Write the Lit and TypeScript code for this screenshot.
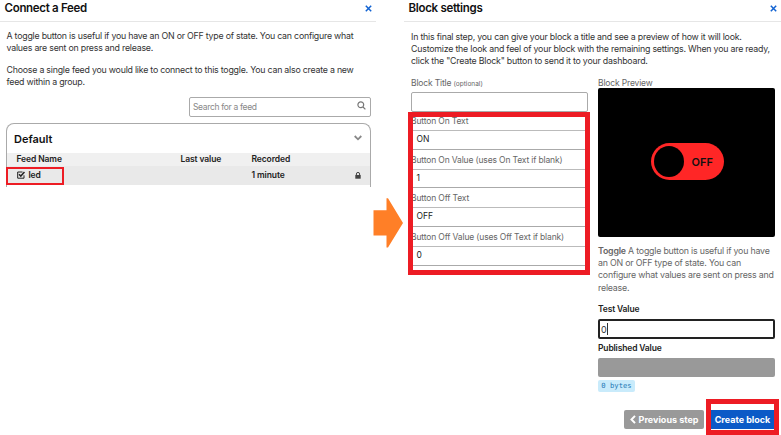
import { LitElement, html, css } from "lit";
import { customElement, property } from "lit/decorators.js";

const base = css`
  * { box-sizing: border-box; }
  p, h2 { margin: 0; }
  .l { display: block; white-space: nowrap; }
  svg { display: block; }
`;

@customElement("panel-header")
class PanelHeader extends LitElement {
  @property() heading = "";
  static styles = [base, css`
    :host { display: flex; height: 22px; justify-content: space-between; align-items: center; border-bottom: 1px solid #e6e6e6; padding: 0 4px 5px 4.5px; }
    h2 { font-size: 11.5px; font-weight: 600; line-height: 16px; color: #111; white-space: nowrap; letter-spacing: -.3px; }
  `];
  render() {
    return html`<h2>${this.heading}</h2>
      <svg width="7" height="7" viewBox="0 0 7 7"><path d="M.8.8 6.2 6.2M6.2.8.8 6.2" stroke="#1263d2" stroke-width="1.5" fill="none"/></svg>`;
  }
}

@customElement("feed-panel")
class FeedPanel extends LitElement {
  static styles = [base, css`
    :host { display: block; width: 376px; }
    .intro { padding: 8px 0 0 6.5px; font-size: 8.8px; line-height: 12px; color: #333; letter-spacing: -.22px; }
    .intro p { margin-bottom: 10px; }
    .search { margin: -1px 5px 6px auto; width: 182px; height: 20px; border: 1px solid #aaa; border-radius: 2px; display: flex; align-items: center; justify-content: space-between; padding: 0 4px 0 3px; font-size: 8.5px; letter-spacing: -.33px; color: #888; }
    .search svg { margin-bottom: 3px; }
    .card { position: relative; margin: 0 5px 0 6px; height: 64px; border: 1px solid #aaa; border-bottom: 0; border-radius: 8px 8px 0 0; }
    .top { height: 29px; display: flex; align-items: center; justify-content: space-between; padding: 1px 8px 0 7px; font-size: 11px; font-weight: 600; color: #111; }
    .top svg { margin-bottom: 3px; }
    .row { display: grid; grid-template-columns: 164px 71px 1fr 8px; padding: 0 7.5px 0 9.5px; align-items: center; font-size: 8.5px; font-weight: 600; color: #222; white-space: nowrap; letter-spacing: -.1px; }
    .head { height: 13px; padding-bottom: 1.5px; background: #f0f0f0; }
    .item { height: 19px; padding-bottom: 1px; background: #e9e9e9; }
    .name { display: flex; align-items: center; gap: 4px; }
    .mark { position: absolute; left: -1px; top: 43px; width: 58px; height: 18px; border: 2px solid #ed1c24; }
  `];
  render() {
    return html`<panel-header heading="Connect a Feed"></panel-header>
      <div class="intro">
        <p><span class="l">A toggle button is useful if you have an ON or OFF type of state. You can configure what</span><span class="l">values are sent on press and release.</span></p>
        <p><span class="l">Choose a single feed you would like to connect to this toggle. You can also create a new</span><span class="l">feed within a group.</span></p>
      </div>
      <div class="search"><span>Search for a feed</span>
        <svg width="9" height="9" viewBox="0 0 9 9" fill="none" stroke="#777" stroke-width="1.2"><circle cx="3.8" cy="3.8" r="2.9"/><path d="m6 6 2.4 2.4"/></svg></div>
      <div class="card">
        <div class="top"><span>Default</span><svg width="8" height="6" viewBox="0 0 8 6"><path d="M.7 1 4 4.3 7.3 1" stroke="#888" stroke-width="1.8" fill="none"/></svg></div>
        <div class="row head"><span>Feed Name</span><span>Last value</span><span>Recorded</span></div>
        <div class="row item">
          <span class="name"><svg width="8" height="8" viewBox="0 0 8 8" fill="none" stroke="#222"><path d="M7 4.3V7.2H.7V1H5.5"/><path d="m2 3.2 1.8 1.9L7.5 1" stroke-width="1.5"/></svg>led</span>
          <span></span><span>1 minute</span>
          <svg width="6" height="7" viewBox="0 0 6 7"><path d="M1.4 3V2a1.6 1.6 0 0 1 3.2 0v1" fill="none" stroke="#444"/><path d="M.3 3h5.4v3.7H.3z" fill="#444"/></svg>
        </div>
        <div class="mark"></div>
      </div>`;
  }
}

@customElement("settings-panel")
class SettingsPanel extends LitElement {
  static styles = [base, css`
    :host { display: block; width: 377px; }
    .intro { padding: 8.5px 0 0 7px; font-size: 8.8px; line-height: 12.2px; letter-spacing: -.21px; color: #333; height: 54px; }
    .cols { display: flex; gap: 10px; padding-left: 7px; }
    .left, .right { width: 177px; }
    .label { font-size: 8.5px; line-height: 12px; letter-spacing: -.15px; color: #666; white-space: nowrap; }
    .label small { font-size: 6.5px; letter-spacing: 0; }
    .text { height: 20px; border: 1px solid #aaa; border-radius: 2px; margin-top: 2px; }
    .title { padding-top: 1px; }
    .group { margin: 0 -2px 0 -3px; width: 182px; height: 163px; border: 5px solid #ed1c24; overflow: hidden; }
    .field .label { height: 13.2px; margin-left: -2px; line-height: 9.8px; }
    .field + .field .label { height: 19px; line-height: 21.4px; }
    .value { height: 19.6px; border-top: 1px solid #bbb; border-bottom: 1px solid #aaa; padding-left: 3.5px; font-size: 8.5px; line-height: 17.8px; color: #222; }
    .preview { height: 149px; margin-top: -1px; background: #000; border-radius: 2px; display: flex; align-items: center; justify-content: center; padding: 0 0 2px 1px; }
    .toggle { width: 73px; height: 37px; border-radius: 19px; background: #ff2626; display: flex; align-items: center; gap: 8px; padding-left: 3px; font-size: 11px; font-weight: 600; color: #111; }
    .knob { width: 30px; height: 31px; border-radius: 50%; background: #000; }
    .desc { margin-top: 8px; font-size: 8.8px; line-height: 12.2px; letter-spacing: -.2px; color: #666; }
    .desc b { font-weight: 600; }
    .strong { margin-top: 9.5px; color: #222; font-weight: 600; }
    .test { height: 20px; margin-top: 4px; border: 2px solid #222; border-radius: 2px; padding-left: 1px; font-size: 9px; display: flex; align-items: center; color: #333; }
    .caret { width: 1px; height: 12px; background: #333; }
    .pub { margin-top: 3px; color: #222; font-weight: 600; }
    .gray { height: 19px; margin-top: 4px; background: #999; border-radius: 2px; }
    .badge { margin-top: 3px; width: 37px; height: 12px; background: #c9ebfb; border-radius: 2px; text-align: center; font: 7.2px/12px "DejaVu Sans Mono", monospace; color: #2277b5; white-space: nowrap; }
    .foot { display: flex; justify-content: flex-end; padding: 7px 2px 0 0; gap: 2px; }
    .btn { height: 19px; display: flex; align-items: center; justify-content: center; gap: 3px; font-size: 9px; font-weight: 700; color: #fff; white-space: nowrap; }
    .prev { width: 80px; background: #999; border-radius: 2px; margin-top: 11px; }
    .create { width: 73px; height: 36px; border: 5px solid #ed1c24; padding-top: 6px; }
    .blue { background: #0b5ac7; }
  `];
  fields = [["Button On Text", "ON"], ["Button On Value (uses On Text if blank)", "1"], ["Button Off Text", "OFF"], ["Button Off Value (uses Off Text if blank)", "0"]];
  render() {
    return html`<panel-header heading="Block settings"></panel-header>
      <div class="intro"><span class="l">In this final step, you can give your block a title and see a preview of how it will look.</span><span class="l">Customize the look and feel of your block with the remaining settings. When you are ready,</span><span class="l">click the "Create Block" button to send it to your dashboard.</span></div>
      <div class="cols">
        <div class="left">
          <div class="label title">Block Title <small>(optional)</small></div>
          <div class="text"></div>
          <div class="group">${this.fields.map(([l, v]) => html`<div class="field"><div class="label">${l}</div><div class="value">${v}</div></div>`)}</div>
        </div>
        <div class="right">
          <div class="label title">Block Preview</div>
          <div class="preview"><div class="toggle"><span class="knob"></span><span>OFF</span></div></div>
          <div class="desc"><span class="l"><b>Toggle</b> A toggle button is useful if you have</span><span class="l">an ON or OFF type of state. You can</span><span class="l">configure what values are sent on press and</span><span class="l">release.</span></div>
          <div class="label strong">Test Value</div>
          <div class="test">0<span class="caret"></span></div>
          <div class="label pub">Published Value</div>
          <div class="gray"></div>
          <div class="badge">0 bytes</div>
        </div>
      </div>
      <div class="foot">
        <div class="btn prev"><svg width="6" height="9" viewBox="0 0 6 9"><path d="M5 .9 1.5 4.5 5 8.1" stroke="#fff" stroke-width="2" fill="none"/></svg>Previous step</div>
        <div class="create"><div class="btn blue">Create block</div></div>
      </div>`;
  }
}

@customElement("app-root")
class AppRoot extends LitElement {
  static styles = [base, css`
    :host { display: flex; position: relative; width: 781px; height: 435px; overflow: hidden; background: #fff; justify-content: space-between; font-family: Inter, "Liberation Sans", sans-serif; }
    .arrow { position: absolute; left: 373px; top: 197px; }
  `];
  render() {
    return html`<feed-panel></feed-panel><settings-panel></settings-panel>
      <svg class="arrow" width="31" height="52" viewBox="0 0 31 52"><path d="M.5 13.3H13.5V1.2H15L30 26 15 50.5H13.5V38.5H.5z" fill="#ff7f27"/></svg>`;
  }
}
